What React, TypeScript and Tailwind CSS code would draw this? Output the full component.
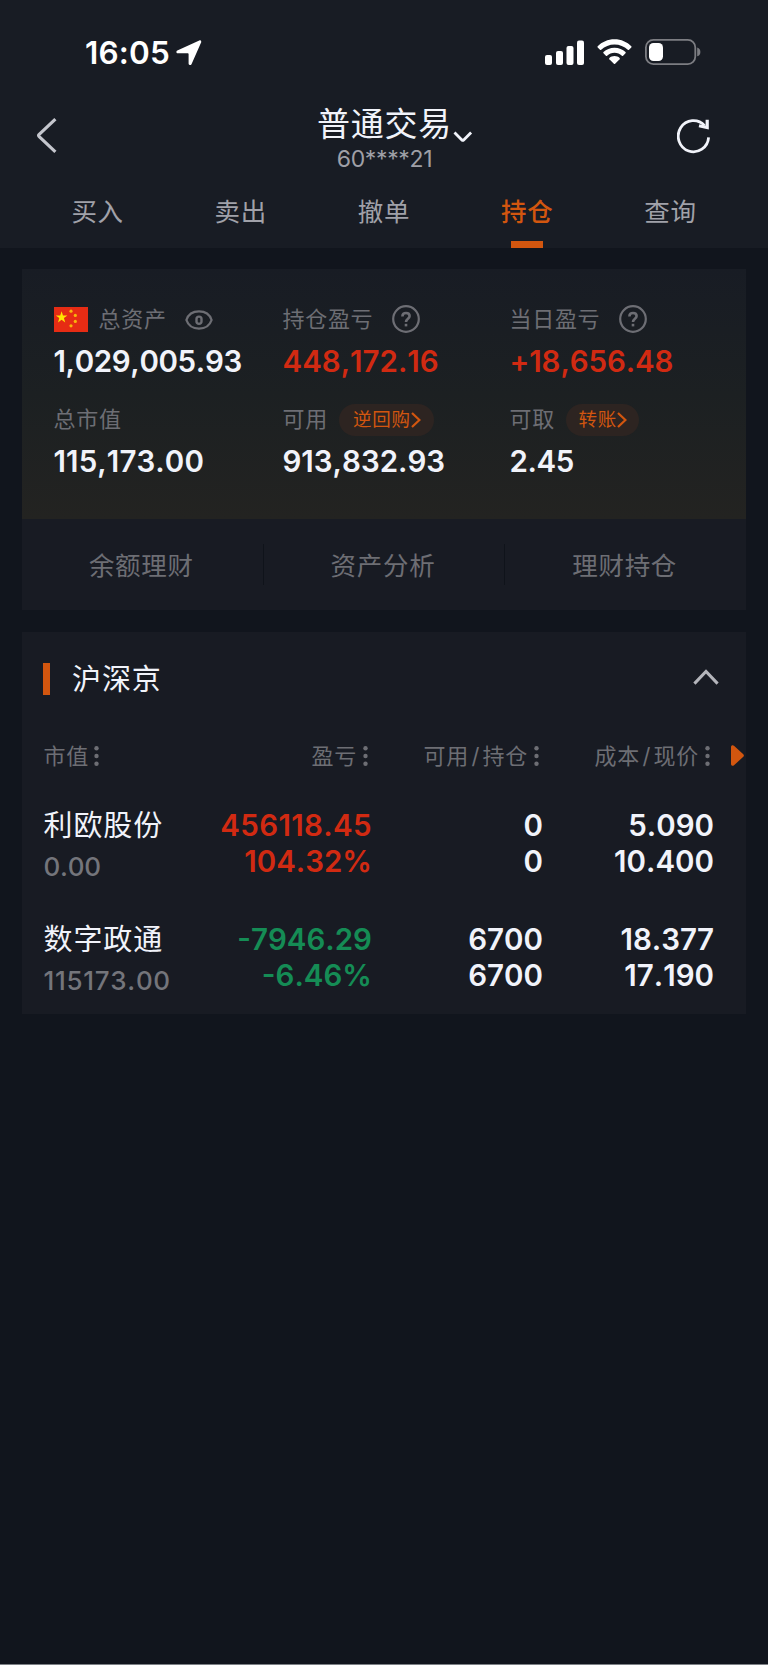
import React from "react";
import clsx from "clsx";

type Holding = {
  name: string;
  marketValue: string;
  marketClass: string;
  profit: string;
  profitClass: string;
  profitRate: string;
  up: boolean;
  available: string;
  total: string;
  cost: string;
  price: string;
};

const tabs = ["买入", "卖出", "撤单", "持仓", "查询"];
const actions = ["余额理财", "资产分析", "理财持仓"];

const holdings: Holding[] = [
  {
    name: "利欧股份",
    marketValue: "0.00",
    marketClass: "tracking-[-0.2px]",
    profit: "456118.45",
    profitClass: "tracking-[0.35px]",
    profitRate: "104.32%",
    up: true,
    available: "0",
    total: "0",
    cost: "5.090",
    price: "10.400",
  },
  {
    name: "数字政通",
    marketValue: "115173.00",
    marketClass: "tracking-[0.7px]",
    profit: "-7946.29",
    profitClass: "tracking-normal",
    profitRate: "-6.46%",
    up: false,
    available: "6700",
    total: "6700",
    cost: "18.377",
    price: "17.190",
  },
];

const StatusBar = () => (
  <div className="flex h-[105px] items-center justify-between pl-[85px] pr-[67px] text-white">
    <div className="flex items-center">
      <span className="w-[91px] text-[31.5px] leading-none font-semibold tracking-[0.2px] [font-kerning:none]">16:05</span>
      <svg width="26" height="26" viewBox="0 0 26 26" fill="currentColor">
        <path d="M23.3 .5 1.3 10.6C-.1 11.3.2 13.2 1.8 13.2H11.8C12.3 13.2 12.6 13.5 12.6 14V23.6C12.6 25.3 14.8 25.6 15.5 24.2L25.1 2.6C25.7 1.2 24.6-.1 23.3.5Z" />
      </svg>
    </div>
    <div className="flex items-center">
      <svg width="40" height="26" viewBox="0 0 40 26" fill="currentColor">
        <rect x="0" y="15" width="7" height="10" rx="2" />
        <rect x="11" y="11" width="7" height="14" rx="2" />
        <rect x="21.5" y="6" width="7" height="19" rx="2" />
        <rect x="32" y="0.5" width="7" height="24.5" rx="2" />
      </svg>
      <svg className="mb-px ml-3" width="35" height="26" viewBox="0 0 35 26" fill="currentColor">
        <path d="M17.5 .2C24.2.2 30.1 2.9 34.3 7.2C34.7 7.6 34.7 8 34.3 8.4L32 10.8C31.6 11.2 31.2 11.2 30.8 10.8C27.2 7.4 22.6 5.4 17.5 5.4S7.8 7.4 4.2 10.8C3.8 11.2 3.4 11.2 3 10.8L.7 8.4C.3 8 .3 7.6.7 7.2C4.9 2.9 10.8.2 17.5.2Z" />
        <path d="M17.5 8.7C21.9 8.7 25.7 10.4 28.5 13.1C28.9 13.5 28.9 13.9 28.5 14.3L26.1 16.7C25.7 17.1 25.3 17.1 24.9 16.7C22.9 14.9 20.3 13.8 17.5 13.8S12.1 14.9 10.1 16.7C9.7 17.1 9.3 17.1 8.9 16.7L6.5 14.3C6.1 13.9 6.1 13.5 6.5 13.1C9.3 10.4 13.1 8.7 17.5 8.7Z" />
        <path d="M17.5 17.1C19.5 17.1 21.3 17.8 22.6 19C23 19.4 23 19.8 22.6 20.2L18.1 24.7C17.7 25.1 17.3 25.1 16.9 24.7L12.4 20.2C12 19.8 12 19.4 12.4 19C13.7 17.8 15.5 17.1 17.5 17.1Z" />
      </svg>
      <svg className="mb-px ml-[13px]" width="56" height="26" viewBox="0 0 56 26">
        <rect x="0.9" y="0.9" width="49.4" height="24.2" rx="7.5" fill="none" stroke="#7c7d82" strokeWidth="1.8" />
        <rect x="4" y="4" width="14" height="18" rx="4.5" fill="#fff" />
        <path d="M52.2 8.6C54.4 9.2 55.4 11 55.4 12.9S54.4 16.6 52.2 17.2Z" fill="#7c7d82" />
      </svg>
    </div>
  </div>
);

const NavBar = () => (
  <div className="flex h-[70px] items-start justify-between pl-[36px] pr-[57px]">
    <svg className="mt-[13px]" width="22" height="36" viewBox="0 0 22 36" fill="none" stroke="#c4c6cd" strokeWidth="3.2">
      <path d="M19.4 1.2 3.2 16.4C2.6 17 2.6 18 3.2 18.6L19.4 33.8" />
    </svg>
    <div className="ml-[34px] flex flex-col items-center">
      <div className="relative pt-px text-[33px] leading-[37px] tracking-[0.7px] text-[#f1f3fa]">
        普通交易
        <svg className="absolute top-[26px] left-[136px]" width="20" height="12" viewBox="0 0 20 12" fill="none" stroke="currentColor" strokeWidth="2.8">
          <path d="M1.5 1.4 8.9 8.9C9.4 9.4 10.2 9.4 10.7 8.9L18.1 1.4" />
        </svg>
      </div>
      <div className="text-[23px] leading-[33px] tracking-[-0.35px] text-[#9fa0a7]">60****21</div>
    </div>
    <svg className="mt-[13px]" width="34" height="36" viewBox="0 0 34 36" fill="none" stroke="#f1f3fa" strokeWidth="2.8">
      <path d="M31.6 19.3A15.2 15.6 0 1 1 27.6 7.6" />
      <path d="M30.2 1.8V9.6L22 7.8" strokeWidth="3.2" />
    </svg>
  </div>
);

const Tabs = () => (
  <div className="flex h-[73px] items-center px-[26px]">
    {tabs.map((tab) => (
      <div
        key={tab}
        className={clsx(
          "relative flex h-full flex-1 items-center justify-center pt-0.5 text-[25.5px] tracking-[0.7px]",
          tab === "持仓" ? "font-medium text-[#d2560f]" : "text-[#a0a1a9]"
        )}
      >
        {tab}
        {tab === "持仓" && (
          <span className="absolute bottom-0 left-[55px] h-[7.5px] w-8 bg-[#d2560f]" />
        )}
      </div>
    ))}
  </div>
);

const Flag = () => (
  <svg width="34" height="25" viewBox="0 0 34 25" className="mr-[11px]">
    <rect width="34" height="25" fill="#e62c14" />
    <path
      d="M7.6 4.2 9 8.4H13.4L9.9 11.1 11.2 15.4 7.6 12.8 4 15.4 5.3 11.1 1.8 8.4H6.2Z"
      fill="#ffe600"
    />
    <circle cx="17" cy="4.2" r="1.6" fill="#f9b40c" />
    <circle cx="21.3" cy="8.4" r="1.6" fill="#f9b40c" />
    <circle cx="21.3" cy="14.4" r="1.6" fill="#f9b40c" />
    <circle cx="17" cy="18.8" r="1.6" fill="#f9b40c" />
  </svg>
);

const Eye = () => (
  <svg width="28" height="20" viewBox="0 0 28 20" fill="none" stroke="currentColor" strokeWidth="2.3" className="ml-[18.5px]">
    <path d="M1.4 10C3.2 4.6 8 1.4 14 1.4S24.8 4.6 26.6 10C24.8 15.4 20 18.6 14 18.6S3.2 15.4 1.4 10Z" />
    <rect x="11.5" y="6.6" width="5" height="7.2" rx="2.4" strokeWidth="2.4" />
  </svg>
);

const Help = () => (
  <svg width="28" height="28" viewBox="0 0 28 28" fill="none" stroke="currentColor" strokeWidth="2.2" className="mb-px ml-[18.5px]">
    <circle cx="14" cy="14" r="12.8" />
    <path d="M10.4 11.4C10.4 9 11.8 8 14 8S17.6 9.2 17.6 11C17.6 13.8 14 13.6 14 17" strokeWidth="2.6" />
    <path d="M14 18.8V21.4" strokeWidth="2.6" />
  </svg>
);

const Pill = ({ text, className }: { text: string; className: string }) => (
  <span className={clsx("flex h-8 items-center rounded-full bg-[#2d2421] text-[18.5px] tracking-[0.8px] text-[#d2560f]", className)}>
    {text}
    <svg width="10" height="16" viewBox="0 0 10 16" fill="none" stroke="currentColor" strokeWidth="2.2">
      <path d="M1 1 8.4 8 1 15" />
    </svg>
  </span>
);

type StatProps = {
  label: string;
  value: string;
  valueClass: string;
  before?: React.ReactNode;
  after?: React.ReactNode;
};

const Stat = ({ label, value, valueClass, before, after }: StatProps) => (
  <div>
    <div className="flex h-[37px] items-center text-[22px] tracking-[0.7px] text-[#6d6e74]">
      {before}
      {label}
      {after}
    </div>
    <div className={clsx("text-[29.5px] leading-[46px] font-semibold [font-kerning:none]", valueClass)}>
      {value}
    </div>
  </div>
);

const AssetCard = () => (
  <div className="mx-[22px] mt-[21px]">
    <div className="grid h-[250px] grid-cols-[229px_227px_1fr] content-start gap-y-[17px] bg-linear-to-b from-[#181c24] via-[#1c2022] to-[#232321] pt-8 pl-[31.5px]">
      <Stat label="总资产" value="1,029,005.93" valueClass="text-[#f1f3fa] tracking-[-0.35px]" before={<Flag />} after={<Eye />} />
      <Stat label="持仓盈亏" value="448,172.16" valueClass="text-[#d12a12]" after={<Help />} />
      <Stat label="当日盈亏" value="+18,656.48" valueClass="text-[#d12a12] tracking-[-0.1px]" after={<Help />} />
      <Stat label="总市值" value="115,173.00" valueClass="text-[#f1f3fa] tracking-[0.1px]" />
      <Stat label="可用" value="913,832.93" valueClass="text-[#f1f3fa]" after={<Pill text="逆回购" className="ml-[11px] w-[95px] pl-[14px]" />} />
      <Stat label="可取" value="2.45" valueClass="text-[#f1f3fa] tracking-[-0.4px]" after={<Pill text="转账" className="ml-[11px] w-[73px] pl-[12.5px]" />} />
    </div>
    <div className="flex h-[91px] items-center bg-[#181b23]">
      {actions.map((action, i) => (
        <div
          key={action}
          className={clsx(
            "flex h-[41px] flex-1 items-center justify-center pt-[3px] pr-[2px] text-[25.5px] tracking-[0.7px] text-[#6d6e74]",
            i > 0 && "border-l border-[#0f131a]"
          )}
        >
          {action}
        </div>
      ))}
    </div>
  </div>
);

const ColumnTitle = ({ text, sub, className }: { text: string; sub?: string; className?: string }) => (
  <div className={clsx("flex items-center", className)}>
    <span className="mr-[5.5px] tracking-[0.7px]">
      {text}
      {sub && (
        <>
          <span className="mx-[2.5px]">/</span>
          {sub}
        </>
      )}
    </span>
    <svg className="mb-px" width="5" height="20" viewBox="0 0 5 20" fill="currentColor">
      <circle cx="2.5" cy="2.2" r="2.2" />
      <circle cx="2.5" cy="10" r="2.2" />
      <circle cx="2.5" cy="17.8" r="2.2" />
    </svg>
  </div>
);

const HoldingsCard = () => (
  <div className="mx-[22px] mt-[22px] h-[382px] bg-[#181b23]">
    <div className="flex h-[94px] items-center pr-[27px] pl-[21px]">
      <span className="mb-px h-8 w-[7px] bg-[#d2560f]" />
      <span className="ml-[22px] pt-px text-[29px] tracking-[0.9px] text-[#f1f3fa]">沪深京</span>
      <svg className="mb-[4px] ml-auto" width="26" height="16" viewBox="0 0 26 16" fill="none" stroke="#b4b5bb" strokeWidth="3">
        <path d="M1.4 14.6 13 2.4 24.6 14.6" />
      </svg>
    </div>
    <div className="relative grid h-[61px] grid-cols-[150px_174px_171px_171px] items-center pl-[21.5px] text-[22px] text-[#6d6e74]">
      <ColumnTitle text="市值" />
      <ColumnTitle text="盈亏" className="justify-end" />
      <ColumnTitle text="可用" sub="持仓" className="justify-end" />
      <ColumnTitle text="成本" sub="现价" className="justify-end" />
      <svg className="absolute top-[19px] right-[2px]" width="13" height="21" viewBox="0 0 13 21" fill="#d2560f">
        <path d="M0 2C0 .2 1.8-.4 3 .7L12.3 9.2C13.1 10 13.1 11 12.3 11.8L3 20.3C1.8 21.4 0 20.8 0 19Z" />
      </svg>
    </div>
    {holdings.map((item) => (
      <div
        key={item.name}
        className="grid h-[114px] grid-cols-[150px_178.5px_171px_171px] pt-[19.5px] pl-[21.5px] text-[29.5px] leading-[36.5px] font-semibold text-[#f1f3fa] [font-kerning:none]"
      >
        <div>
          <div className="pt-px text-[29px] font-normal tracking-[0.9px]">{item.name}</div>
          <div className={clsx("text-[26px] leading-[46px] font-medium text-[#74757b]", item.marketClass)}>{item.marketValue}</div>
        </div>
        <div className={clsx("text-right", item.up ? "text-[#d12a12]" : "text-[#158c55]")}>
          <div className={item.profitClass}>{item.profit}</div>
          <div>{item.profitRate}</div>
        </div>
        <div className="text-right">
          <div>{item.available}</div>
          <div>{item.total}</div>
        </div>
        <div className="text-right">
          <div>{item.cost}</div>
          <div>{item.price}</div>
        </div>
      </div>
    ))}
  </div>
);

const App = () => {
  return (
    <div className="h-[1665px] w-[768px] overflow-hidden border-b border-[#7d8186] bg-[#11151d] font-['Inter','Noto_Sans_CJK_SC',sans-serif] whitespace-nowrap">
      <div className="h-[248px] bg-[#181c24]">
        <StatusBar />
        <NavBar />
        <Tabs />
      </div>
      <AssetCard />
      <HoldingsCard />
    </div>
  );
};

export default App;
